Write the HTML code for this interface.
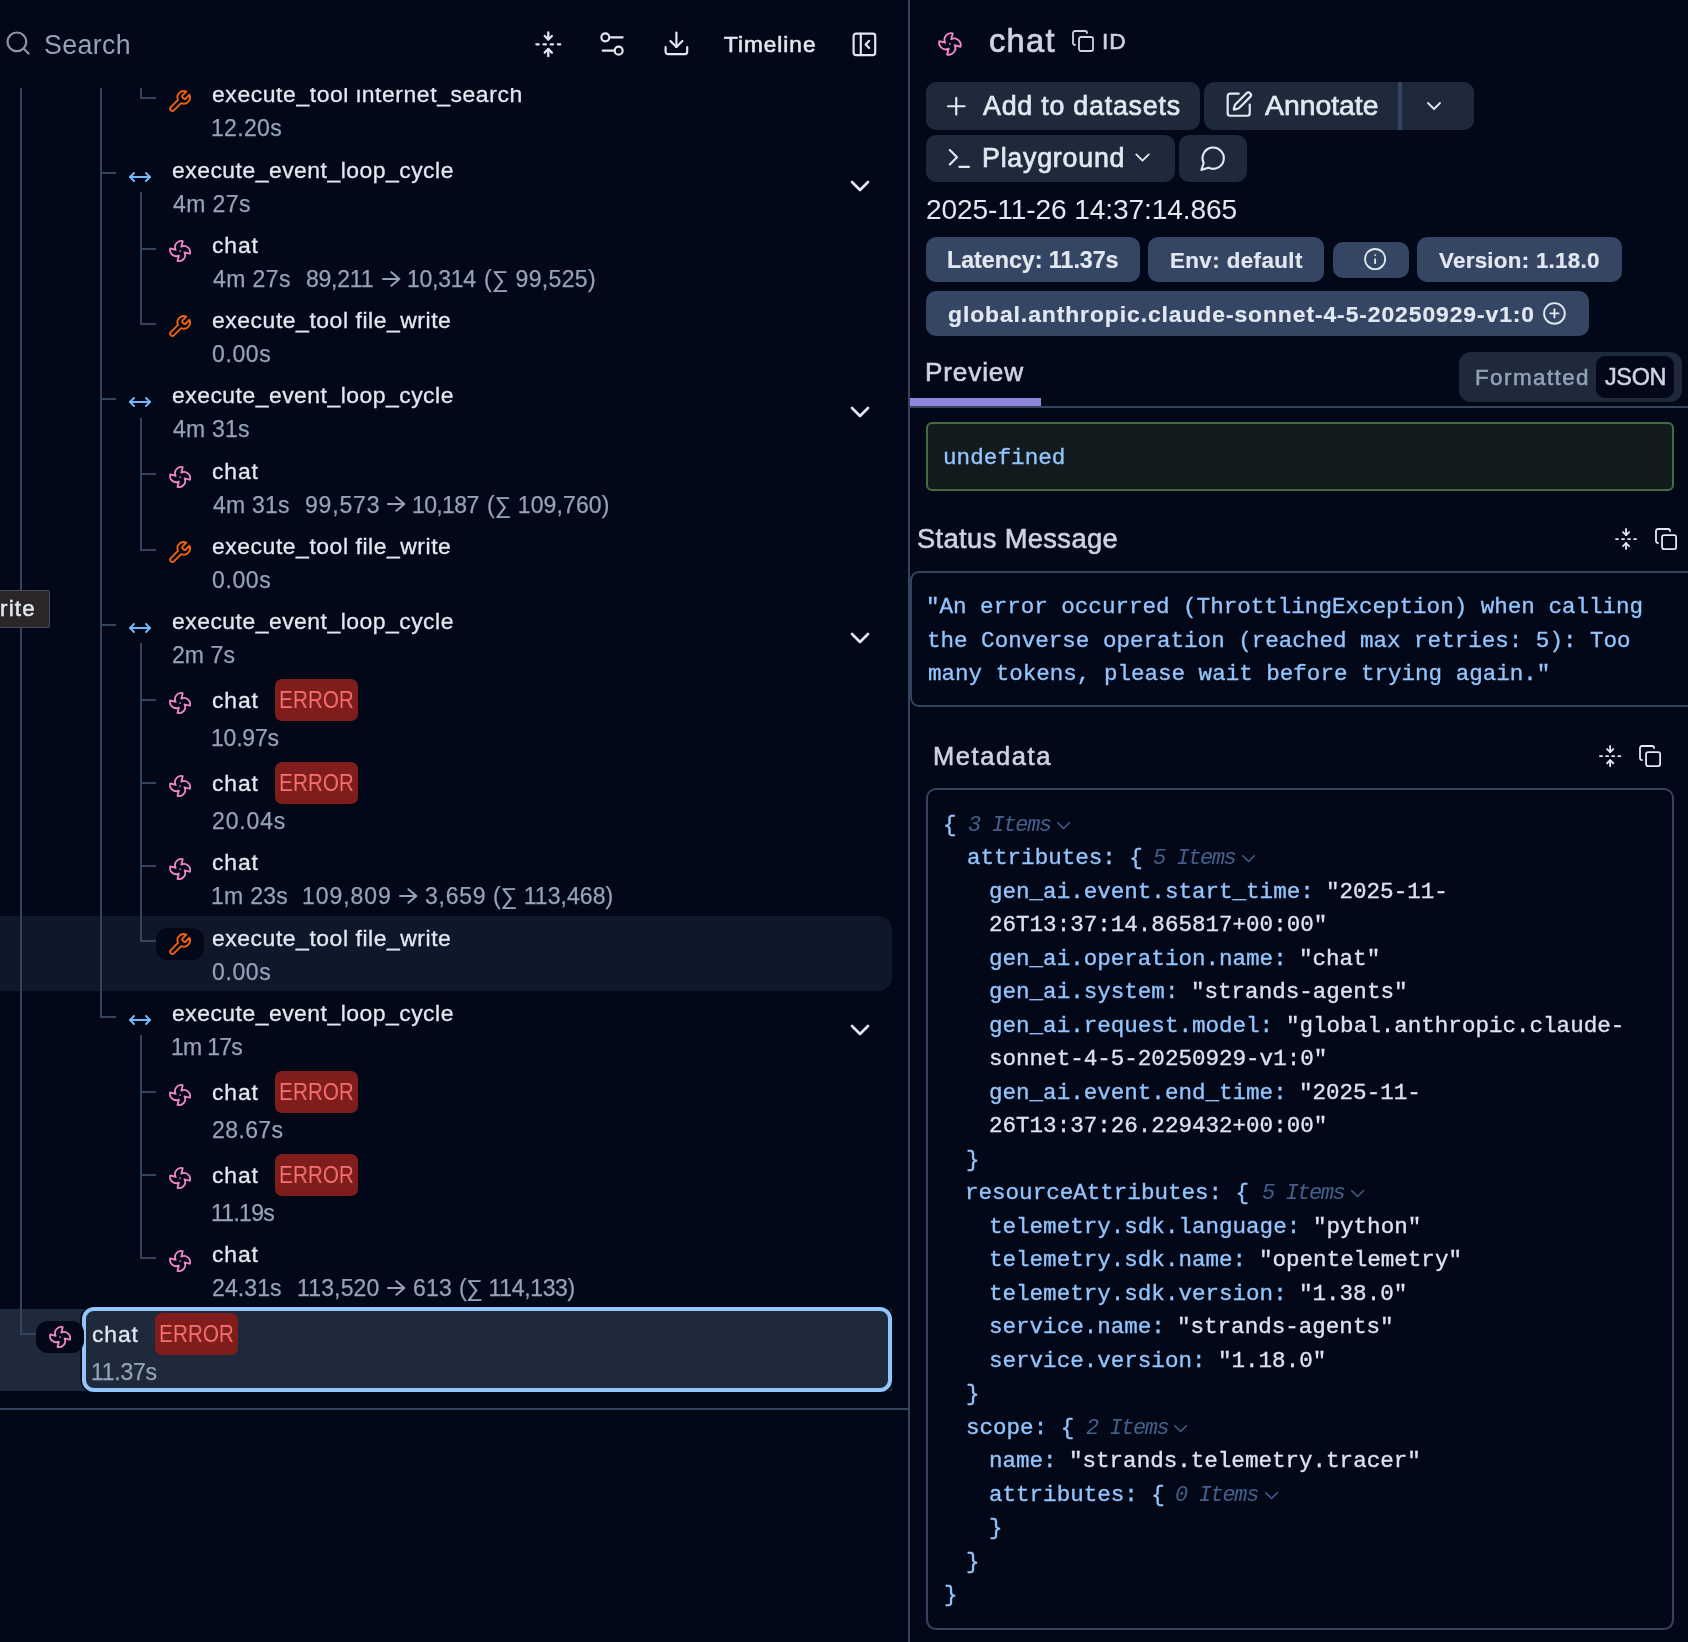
<!DOCTYPE html>
<html><head><meta charset="utf-8"><title>Trace</title>
<style>
html,body{margin:0;padding:0;}
body{width:1688px;height:1642px;overflow:hidden;background:#020817;position:relative;font-family:"Liberation Sans",sans-serif;}
.t{position:absolute;line-height:1;white-space:pre;will-change:transform;}
.s{font-family:"Liberation Sans",sans-serif;}
.m{font-family:"Liberation Mono",monospace;}
.b{position:absolute;}
.i{position:absolute;fill:none;stroke-linecap:round;stroke-linejoin:round;overflow:visible;}
.clip{position:absolute;overflow:hidden;}
</style></head><body>
<div class="clip" style="left:0;top:88px;width:908px;height:1554px">
<div class="b" style="left:-20px;top:827.85px;width:912px;height:75px;background:#0f172a;border-radius:14px"></div>
<div class="b" style="left:-20px;top:1220.8px;width:912px;height:82.6px;background:#1e293b;border-radius:0"></div>
<div class="b" style="left:81.5px;top:1219px;width:810.5px;height:84.8px;background:#1e293b;border-radius:12px;border:4px solid #93c5fd;box-sizing:border-box;box-shadow:0 0 0 1.5px #020817"></div>
<div class="b" style="left:20px;top:0px;width:2px;height:1246.8px;background:#34445f"></div>
<div class="b" style="left:100px;top:0px;width:2px;height:929.5px;background:#34445f"></div>
<div class="b" style="left:140px;top:0px;width:2px;height:11px;background:#34445f"></div>
<div class="b" style="left:140px;top:103.75px;width:2px;height:133px;background:#34445f"></div>
<div class="b" style="left:140px;top:329.5px;width:2px;height:133px;background:#34445f"></div>
<div class="b" style="left:140px;top:555.25px;width:2px;height:299px;background:#34445f"></div>
<div class="b" style="left:140px;top:947px;width:2px;height:223.75px;background:#34445f"></div>
<div class="b" style="left:140px;top:9px;width:16px;height:2px;background:#34445f"></div>
<div class="b" style="left:100px;top:84.25px;width:16px;height:2px;background:#34445f"></div>
<div class="b" style="left:140px;top:159.5px;width:16px;height:2px;background:#34445f"></div>
<div class="b" style="left:140px;top:234.75px;width:16px;height:2px;background:#34445f"></div>
<div class="b" style="left:100px;top:310px;width:16px;height:2px;background:#34445f"></div>
<div class="b" style="left:140px;top:385.25px;width:16px;height:2px;background:#34445f"></div>
<div class="b" style="left:140px;top:460.5px;width:16px;height:2px;background:#34445f"></div>
<div class="b" style="left:100px;top:535.75px;width:16px;height:2px;background:#34445f"></div>
<div class="b" style="left:140px;top:611px;width:16px;height:2px;background:#34445f"></div>
<div class="b" style="left:140px;top:694px;width:16px;height:2px;background:#34445f"></div>
<div class="b" style="left:140px;top:777px;width:16px;height:2px;background:#34445f"></div>
<div class="b" style="left:140px;top:852.25px;width:16px;height:2px;background:#34445f"></div>
<div class="b" style="left:100px;top:927.5px;width:16px;height:2px;background:#34445f"></div>
<div class="b" style="left:140px;top:1002.75px;width:16px;height:2px;background:#34445f"></div>
<div class="b" style="left:140px;top:1085.75px;width:16px;height:2px;background:#34445f"></div>
<div class="b" style="left:140px;top:1168.75px;width:16px;height:2px;background:#34445f"></div>
<div class="b" style="left:20px;top:1244.8px;width:16px;height:2px;background:#34445f"></div>
<svg class="i" style="left:167.4px;top:0.7px" width="25.1" height="25.1" viewBox="0 0 24 24" stroke="#f2620f" stroke-width="1.8"><path d="M14.7 6.3a1 1 0 0 0 0 1.4l1.6 1.6a1 1 0 0 0 1.4 0l3.77-3.77a6 6 0 0 1-7.94 7.94l-6.91 6.91a2.12 2.12 0 0 1-3-3l6.91-6.91a6 6 0 0 1 7.94-7.94l-3.76 3.76z"/></svg>
<div class="t s " style="left:212.23px;top:-5px;font-size:22.95px;color:#e2e8f0;-webkit-text-stroke:0.3px #e2e8f0;letter-spacing:0.58px">execute_tool internet_search</div>
<div class="t s " style="left:211.28px;top:29px;font-size:23px;color:#94a3b8;-webkit-text-stroke:0.25px #94a3b8;letter-spacing:0.32px">12.20s</div>
<svg class="i" style="left:128px;top:76.55px" width="24" height="24" viewBox="0 0 24 24" stroke="#78b6fb" stroke-width="1.95"><polyline points="18 8 22 12 18 16"/><polyline points="6 8 2 12 6 16"/><line x1="2" x2="22" y1="12" y2="12"/></svg>
<div class="t s " style="left:172.23px;top:71px;font-size:22.95px;color:#e2e8f0;-webkit-text-stroke:0.3px #e2e8f0;letter-spacing:0.48px">execute_event_loop_cycle</div>
<div class="t s " style="left:172.66px;top:105px;font-size:23px;color:#94a3b8;-webkit-text-stroke:0.25px #94a3b8;letter-spacing:0.42px">4m 27s</div>
<svg class="i" style="left:844px;top:82.25px" width="32" height="32" viewBox="0 0 24 24" stroke="#e2e8f0" stroke-width="2"><path d="m6 9 6 6 6-6"/></svg>
<svg class="i" style="left:167.9px;top:151.4px" width="24.2" height="24.2" viewBox="0 0 24 24" stroke="#f58ac6" stroke-width="1.75"><path d="M10.827 16.379a6.082 6.082 0 0 1-8.618-7.002l5.412 1.45a6.082 6.082 0 0 1 7.002-8.618l-1.45 5.412a6.082 6.082 0 0 1 8.618 7.002l-5.412-1.45a6.082 6.082 0 0 1-7.002 8.618l1.45-5.412Z"/><path d="M12 12v.01"/></svg>
<div class="t s " style="left:212.23px;top:146px;font-size:22.95px;color:#e2e8f0;-webkit-text-stroke:0.3px #e2e8f0;letter-spacing:0.83px">chat</div>
<div class="t s " style="left:212.66px;top:180px;font-size:23px;color:#94a3b8;-webkit-text-stroke:0.25px #94a3b8;letter-spacing:0.42px">4m 27s</div>
<div class="t s " style="left:306.2px;top:180px;font-size:23px;color:#94a3b8;-webkit-text-stroke:0.25px #94a3b8;letter-spacing:-0.24px">89,211</div>
<svg class="i" style="left:381.3px;top:181.7px" width="22" height="18" viewBox="0 0 22 18" stroke="#94a3b8" stroke-width="2.1"><path d="M2 9h16.3M10.4 2.2l7.9 6.8-7.9 6.8"/></svg>
<div class="t s " style="left:406.79px;top:180px;font-size:23px;color:#94a3b8;-webkit-text-stroke:0.25px #94a3b8;letter-spacing:-0.24px">10,314</div>
<div class="t s " style="left:484.05px;top:180px;font-size:23px;color:#94a3b8;-webkit-text-stroke:0.25px #94a3b8;letter-spacing:0.35px">(∑ 99,525)</div>
<svg class="i" style="left:167.4px;top:226.45px" width="25.1" height="25.1" viewBox="0 0 24 24" stroke="#f2620f" stroke-width="1.8"><path d="M14.7 6.3a1 1 0 0 0 0 1.4l1.6 1.6a1 1 0 0 0 1.4 0l3.77-3.77a6 6 0 0 1-7.94 7.94l-6.91 6.91a2.12 2.12 0 0 1-3-3l6.91-6.91a6 6 0 0 1 7.94-7.94l-3.76 3.76z"/></svg>
<div class="t s " style="left:212.23px;top:221px;font-size:22.95px;color:#e2e8f0;-webkit-text-stroke:0.3px #e2e8f0;letter-spacing:0.54px">execute_tool file_write</div>
<div class="t s " style="left:212.21px;top:255px;font-size:23px;color:#94a3b8;-webkit-text-stroke:0.25px #94a3b8;letter-spacing:0.61px">0.00s</div>
<svg class="i" style="left:128px;top:302.3px" width="24" height="24" viewBox="0 0 24 24" stroke="#78b6fb" stroke-width="1.95"><polyline points="18 8 22 12 18 16"/><polyline points="6 8 2 12 6 16"/><line x1="2" x2="22" y1="12" y2="12"/></svg>
<div class="t s " style="left:172.23px;top:296px;font-size:22.95px;color:#e2e8f0;-webkit-text-stroke:0.3px #e2e8f0;letter-spacing:0.48px">execute_event_loop_cycle</div>
<div class="t s " style="left:172.66px;top:330px;font-size:23px;color:#94a3b8;-webkit-text-stroke:0.25px #94a3b8;letter-spacing:0.22px">4m 31s</div>
<svg class="i" style="left:844px;top:308px" width="32" height="32" viewBox="0 0 24 24" stroke="#e2e8f0" stroke-width="2"><path d="m6 9 6 6 6-6"/></svg>
<svg class="i" style="left:167.9px;top:377.15px" width="24.2" height="24.2" viewBox="0 0 24 24" stroke="#f58ac6" stroke-width="1.75"><path d="M10.827 16.379a6.082 6.082 0 0 1-8.618-7.002l5.412 1.45a6.082 6.082 0 0 1 7.002-8.618l-1.45 5.412a6.082 6.082 0 0 1 8.618 7.002l-5.412-1.45a6.082 6.082 0 0 1-7.002 8.618l1.45-5.412Z"/><path d="M12 12v.01"/></svg>
<div class="t s " style="left:212.23px;top:372px;font-size:22.95px;color:#e2e8f0;-webkit-text-stroke:0.3px #e2e8f0;letter-spacing:0.83px">chat</div>
<div class="t s " style="left:212.66px;top:406px;font-size:23px;color:#94a3b8;-webkit-text-stroke:0.25px #94a3b8;letter-spacing:0.22px">4m 31s</div>
<div class="t s " style="left:304.78px;top:406px;font-size:23px;color:#94a3b8;-webkit-text-stroke:0.25px #94a3b8;letter-spacing:0.83px">99,573</div>
<svg class="i" style="left:385.8px;top:407.45px" width="22" height="18" viewBox="0 0 22 18" stroke="#94a3b8" stroke-width="2.1"><path d="M2 9h16.3M10.4 2.2l7.9 6.8-7.9 6.8"/></svg>
<div class="t s " style="left:412.19px;top:406px;font-size:23px;color:#94a3b8;-webkit-text-stroke:0.25px #94a3b8;letter-spacing:-0.63px">10,187</div>
<div class="t s " style="left:487.25px;top:406px;font-size:23px;color:#94a3b8;-webkit-text-stroke:0.25px #94a3b8;letter-spacing:0.11px">(∑ 109,760)</div>
<svg class="i" style="left:167.4px;top:452.2px" width="25.1" height="25.1" viewBox="0 0 24 24" stroke="#f2620f" stroke-width="1.8"><path d="M14.7 6.3a1 1 0 0 0 0 1.4l1.6 1.6a1 1 0 0 0 1.4 0l3.77-3.77a6 6 0 0 1-7.94 7.94l-6.91 6.91a2.12 2.12 0 0 1-3-3l6.91-6.91a6 6 0 0 1 7.94-7.94l-3.76 3.76z"/></svg>
<div class="t s " style="left:212.23px;top:447px;font-size:22.95px;color:#e2e8f0;-webkit-text-stroke:0.3px #e2e8f0;letter-spacing:0.54px">execute_tool file_write</div>
<div class="t s " style="left:212.21px;top:481px;font-size:23px;color:#94a3b8;-webkit-text-stroke:0.25px #94a3b8;letter-spacing:0.61px">0.00s</div>
<svg class="i" style="left:128px;top:528.05px" width="24" height="24" viewBox="0 0 24 24" stroke="#78b6fb" stroke-width="1.95"><polyline points="18 8 22 12 18 16"/><polyline points="6 8 2 12 6 16"/><line x1="2" x2="22" y1="12" y2="12"/></svg>
<div class="t s " style="left:172.23px;top:522px;font-size:22.95px;color:#e2e8f0;-webkit-text-stroke:0.3px #e2e8f0;letter-spacing:0.48px">execute_event_loop_cycle</div>
<div class="t s " style="left:171.97px;top:556px;font-size:23px;color:#94a3b8;-webkit-text-stroke:0.25px #94a3b8;letter-spacing:0.08px">2m 7s</div>
<svg class="i" style="left:844px;top:533.75px" width="32" height="32" viewBox="0 0 24 24" stroke="#e2e8f0" stroke-width="2"><path d="m6 9 6 6 6-6"/></svg>
<svg class="i" style="left:167.9px;top:602.9px" width="24.2" height="24.2" viewBox="0 0 24 24" stroke="#f58ac6" stroke-width="1.75"><path d="M10.827 16.379a6.082 6.082 0 0 1-8.618-7.002l5.412 1.45a6.082 6.082 0 0 1 7.002-8.618l-1.45 5.412a6.082 6.082 0 0 1 8.618 7.002l-5.412-1.45a6.082 6.082 0 0 1-7.002 8.618l1.45-5.412Z"/><path d="M12 12v.01"/></svg>
<div class="t s " style="left:212.23px;top:601px;font-size:22.95px;color:#e2e8f0;-webkit-text-stroke:0.3px #e2e8f0;letter-spacing:0.83px">chat</div>
<div class="b" style="left:275.1px;top:590.9px;width:82.7px;height:42.1px;background:#7f1d1d;border-radius:7px"></div>
<div class="t s " style="left:278.64px;top:601px;font-size:23.57px;color:#f87171;transform:scaleX(0.8802);transform-origin:0 0">ERROR</div>
<div class="t s " style="left:211.28px;top:639px;font-size:23px;color:#94a3b8;-webkit-text-stroke:0.25px #94a3b8;letter-spacing:-0.2px">10.97s</div>
<svg class="i" style="left:167.9px;top:685.9px" width="24.2" height="24.2" viewBox="0 0 24 24" stroke="#f58ac6" stroke-width="1.75"><path d="M10.827 16.379a6.082 6.082 0 0 1-8.618-7.002l5.412 1.45a6.082 6.082 0 0 1 7.002-8.618l-1.45 5.412a6.082 6.082 0 0 1 8.618 7.002l-5.412-1.45a6.082 6.082 0 0 1-7.002 8.618l1.45-5.412Z"/><path d="M12 12v.01"/></svg>
<div class="t s " style="left:212.23px;top:684px;font-size:22.95px;color:#e2e8f0;-webkit-text-stroke:0.3px #e2e8f0;letter-spacing:0.83px">chat</div>
<div class="b" style="left:275.1px;top:673.9px;width:82.7px;height:42.1px;background:#7f1d1d;border-radius:7px"></div>
<div class="t s " style="left:278.64px;top:684px;font-size:23.57px;color:#f87171;transform:scaleX(0.8802);transform-origin:0 0">ERROR</div>
<div class="t s " style="left:211.97px;top:722px;font-size:23px;color:#94a3b8;-webkit-text-stroke:0.25px #94a3b8;letter-spacing:0.86px">20.04s</div>
<svg class="i" style="left:167.9px;top:768.9px" width="24.2" height="24.2" viewBox="0 0 24 24" stroke="#f58ac6" stroke-width="1.75"><path d="M10.827 16.379a6.082 6.082 0 0 1-8.618-7.002l5.412 1.45a6.082 6.082 0 0 1 7.002-8.618l-1.45 5.412a6.082 6.082 0 0 1 8.618 7.002l-5.412-1.45a6.082 6.082 0 0 1-7.002 8.618l1.45-5.412Z"/><path d="M12 12v.01"/></svg>
<div class="t s " style="left:212.23px;top:763px;font-size:22.95px;color:#e2e8f0;-webkit-text-stroke:0.3px #e2e8f0;letter-spacing:0.83px">chat</div>
<div class="t s " style="left:211.28px;top:797px;font-size:23px;color:#94a3b8;-webkit-text-stroke:0.25px #94a3b8;letter-spacing:0.27px">1m 23s</div>
<div class="t s " style="left:302.49px;top:797px;font-size:23px;color:#94a3b8;-webkit-text-stroke:0.25px #94a3b8;letter-spacing:0.95px">109,809</div>
<svg class="i" style="left:397.8px;top:799.2px" width="22" height="18" viewBox="0 0 22 18" stroke="#94a3b8" stroke-width="2.1"><path d="M2 9h16.3M10.4 2.2l7.9 6.8-7.9 6.8"/></svg>
<div class="t s " style="left:424.6px;top:797px;font-size:23px;color:#94a3b8;-webkit-text-stroke:0.25px #94a3b8;letter-spacing:0.77px">3,659</div>
<div class="t s " style="left:493.25px;top:797px;font-size:23px;color:#94a3b8;-webkit-text-stroke:0.25px #94a3b8;letter-spacing:0.07px">(∑ 113,468)</div>
<div class="b" style="left:156px;top:840.25px;width:48px;height:32px;background:#020817;border-radius:12px"></div>
<svg class="i" style="left:167.4px;top:843.95px" width="25.1" height="25.1" viewBox="0 0 24 24" stroke="#f2620f" stroke-width="1.8"><path d="M14.7 6.3a1 1 0 0 0 0 1.4l1.6 1.6a1 1 0 0 0 1.4 0l3.77-3.77a6 6 0 0 1-7.94 7.94l-6.91 6.91a2.12 2.12 0 0 1-3-3l6.91-6.91a6 6 0 0 1 7.94-7.94l-3.76 3.76z"/></svg>
<div class="t s " style="left:212.23px;top:839px;font-size:22.95px;color:#e2e8f0;-webkit-text-stroke:0.3px #e2e8f0;letter-spacing:0.54px">execute_tool file_write</div>
<div class="t s " style="left:212.21px;top:873px;font-size:23px;color:#94a3b8;-webkit-text-stroke:0.25px #94a3b8;letter-spacing:0.61px">0.00s</div>
<svg class="i" style="left:128px;top:919.8px" width="24" height="24" viewBox="0 0 24 24" stroke="#78b6fb" stroke-width="1.95"><polyline points="18 8 22 12 18 16"/><polyline points="6 8 2 12 6 16"/><line x1="2" x2="22" y1="12" y2="12"/></svg>
<div class="t s " style="left:172.23px;top:914px;font-size:22.95px;color:#e2e8f0;-webkit-text-stroke:0.3px #e2e8f0;letter-spacing:0.48px">execute_event_loop_cycle</div>
<div class="t s " style="left:171.28px;top:948px;font-size:23px;color:#94a3b8;-webkit-text-stroke:0.25px #94a3b8;letter-spacing:-0.71px">1m 17s</div>
<svg class="i" style="left:844px;top:925.5px" width="32" height="32" viewBox="0 0 24 24" stroke="#e2e8f0" stroke-width="2"><path d="m6 9 6 6 6-6"/></svg>
<svg class="i" style="left:167.9px;top:994.65px" width="24.2" height="24.2" viewBox="0 0 24 24" stroke="#f58ac6" stroke-width="1.75"><path d="M10.827 16.379a6.082 6.082 0 0 1-8.618-7.002l5.412 1.45a6.082 6.082 0 0 1 7.002-8.618l-1.45 5.412a6.082 6.082 0 0 1 8.618 7.002l-5.412-1.45a6.082 6.082 0 0 1-7.002 8.618l1.45-5.412Z"/><path d="M12 12v.01"/></svg>
<div class="t s " style="left:212.23px;top:993px;font-size:22.95px;color:#e2e8f0;-webkit-text-stroke:0.3px #e2e8f0;letter-spacing:0.83px">chat</div>
<div class="b" style="left:275.1px;top:982.65px;width:82.7px;height:42.1px;background:#7f1d1d;border-radius:7px"></div>
<div class="t s " style="left:278.64px;top:993px;font-size:23.57px;color:#f87171;transform:scaleX(0.8802);transform-origin:0 0">ERROR</div>
<div class="t s " style="left:211.97px;top:1031px;font-size:23px;color:#94a3b8;-webkit-text-stroke:0.25px #94a3b8;letter-spacing:0.4px">28.67s</div>
<svg class="i" style="left:167.9px;top:1077.65px" width="24.2" height="24.2" viewBox="0 0 24 24" stroke="#f58ac6" stroke-width="1.75"><path d="M10.827 16.379a6.082 6.082 0 0 1-8.618-7.002l5.412 1.45a6.082 6.082 0 0 1 7.002-8.618l-1.45 5.412a6.082 6.082 0 0 1 8.618 7.002l-5.412-1.45a6.082 6.082 0 0 1-7.002 8.618l1.45-5.412Z"/><path d="M12 12v.01"/></svg>
<div class="t s " style="left:212.23px;top:1076px;font-size:22.95px;color:#e2e8f0;-webkit-text-stroke:0.3px #e2e8f0;letter-spacing:0.83px">chat</div>
<div class="b" style="left:275.1px;top:1065.65px;width:82.7px;height:42.1px;background:#7f1d1d;border-radius:7px"></div>
<div class="t s " style="left:278.64px;top:1076px;font-size:23.57px;color:#f87171;transform:scaleX(0.8802);transform-origin:0 0">ERROR</div>
<div class="t s " style="left:211.28px;top:1114px;font-size:23px;color:#94a3b8;-webkit-text-stroke:0.25px #94a3b8;letter-spacing:-0.72px">11.19s</div>
<svg class="i" style="left:167.9px;top:1160.65px" width="24.2" height="24.2" viewBox="0 0 24 24" stroke="#f58ac6" stroke-width="1.75"><path d="M10.827 16.379a6.082 6.082 0 0 1-8.618-7.002l5.412 1.45a6.082 6.082 0 0 1 7.002-8.618l-1.45 5.412a6.082 6.082 0 0 1 8.618 7.002l-5.412-1.45a6.082 6.082 0 0 1-7.002 8.618l1.45-5.412Z"/><path d="M12 12v.01"/></svg>
<div class="t s " style="left:212.23px;top:1155px;font-size:22.95px;color:#e2e8f0;-webkit-text-stroke:0.3px #e2e8f0;letter-spacing:0.83px">chat</div>
<div class="t s " style="left:211.97px;top:1189px;font-size:23px;color:#94a3b8;-webkit-text-stroke:0.25px #94a3b8;letter-spacing:0.1px">24.31s</div>
<div class="t s " style="left:296.79px;top:1189px;font-size:23px;color:#94a3b8;-webkit-text-stroke:0.25px #94a3b8;letter-spacing:0.15px">113,520</div>
<svg class="i" style="left:385.8px;top:1190.95px" width="22" height="18" viewBox="0 0 22 18" stroke="#94a3b8" stroke-width="2.1"><path d="M2 9h16.3M10.4 2.2l7.9 6.8-7.9 6.8"/></svg>
<div class="t s " style="left:412.88px;top:1189px;font-size:23px;color:#94a3b8;-webkit-text-stroke:0.25px #94a3b8;letter-spacing:0.27px">613</div>
<div class="t s " style="left:459.05px;top:1189px;font-size:23px;color:#94a3b8;-webkit-text-stroke:0.25px #94a3b8;letter-spacing:-0.33px">(∑ 114,133)</div>
<div class="b" style="left:36px;top:1232.8px;width:48px;height:32px;background:#020817;border-radius:12px"></div>
<svg class="i" style="left:47.9px;top:1236.7px" width="24.2" height="24.2" viewBox="0 0 24 24" stroke="#f58ac6" stroke-width="1.75"><path d="M10.827 16.379a6.082 6.082 0 0 1-8.618-7.002l5.412 1.45a6.082 6.082 0 0 1 7.002-8.618l-1.45 5.412a6.082 6.082 0 0 1 8.618 7.002l-5.412-1.45a6.082 6.082 0 0 1-7.002 8.618l1.45-5.412Z"/><path d="M12 12v.01"/></svg>
<div class="t s " style="left:92.23px;top:1235px;font-size:22.95px;color:#e2e8f0;-webkit-text-stroke:0.3px #e2e8f0;letter-spacing:0.83px">chat</div>
<div class="b" style="left:155.1px;top:1224.7px;width:82.7px;height:42.1px;background:#7f1d1d;border-radius:7px"></div>
<div class="t s " style="left:158.64px;top:1235px;font-size:23.57px;color:#f87171;transform:scaleX(0.8802);transform-origin:0 0">ERROR</div>
<div class="t s " style="left:91.28px;top:1273px;font-size:23px;color:#94a3b8;-webkit-text-stroke:0.25px #94a3b8;letter-spacing:-0.28px">11.37s</div>
<div class="b" style="left:-6px;top:502.3px;width:56px;height:37.4px;background:#2c2628;border-radius:2px;border:1.5px solid #454c5c;box-sizing:border-box"></div>
<div class="t s tip" style="left:0.48px;top:510px;font-size:22.4px;color:#e2e8f0;-webkit-text-stroke:0.5px #e2e8f0;letter-spacing:1.19px">rite</div>
<div class="b" style="left:0px;top:1320px;width:908px;height:2px;background:#34445f"></div>
</div>
<svg class="i" style="left:3.86px;top:29.46px" width="28.08" height="28.08" viewBox="0 0 24 24" stroke="#8b95a7" stroke-width="1.9"><circle cx="11" cy="11" r="8"/><path d="m21 21-4.3-4.3"/></svg>
<div class="t s " style="left:43.66px;top:32px;font-size:26.71px;color:#94a3b8;letter-spacing:0.41px">Search</div>
<svg class="i" style="left:533.61px;top:29.71px" width="28.58" height="28.58" viewBox="0 0 24 24" stroke="#e2e8f0" stroke-width="1.9"><path d="M12 22v-6"/><path d="M12 8V2"/><path d="M4 12H2"/><path d="M10 12H8"/><path d="M16 12h-2"/><path d="M22 12h-2"/><path d="m15 19-3-3-3 3"/><path d="m15 5-3 3-3-3"/></svg>
<svg class="i" style="left:596px;top:27.8px" width="32" height="32" viewBox="0 0 24 24" stroke="#e2e8f0" stroke-width="1.6"><path d="M20 7h-9"/><path d="M14 17H5"/><circle cx="17" cy="17" r="3"/><circle cx="7" cy="7" r="3"/></svg>
<svg class="i" style="left:661.6px;top:29.4px" width="28.8" height="28.8" viewBox="0 0 24 24" stroke="#e2e8f0" stroke-width="1.8"><path d="M21 15v4a2 2 0 0 1-2 2H5a2 2 0 0 1-2-2v-4"/><polyline points="7 10 12 15 17 10"/><line x1="12" x2="12" y1="15" y2="3"/></svg>
<div class="t s " style="left:724.05px;top:34px;font-size:22.6px;color:#e2e8f0;-webkit-text-stroke:0.6px #e2e8f0;letter-spacing:0.99px">Timeline</div>
<svg class="i" style="left:849.6px;top:29.8px" width="28.8" height="28.8" viewBox="0 0 24 24" stroke="#e2e8f0" stroke-width="1.8"><rect width="18" height="18" x="3" y="3" rx="2"/><path d="M9 3v18"/><path d="m16 15-3-3 3-3"/></svg>
<div class="b" style="left:908px;top:0px;width:2px;height:1642px;background:#34445f"></div>
<svg class="i" style="left:937.08px;top:31.08px" width="25.85" height="25.85" viewBox="0 0 24 24" stroke="#f58ac6" stroke-width="1.75"><path d="M10.827 16.379a6.082 6.082 0 0 1-8.618-7.002l5.412 1.45a6.082 6.082 0 0 1 7.002-8.618l-1.45 5.412a6.082 6.082 0 0 1 8.618 7.002l-5.412-1.45a6.082 6.082 0 0 1-7.002 8.618l1.45-5.412Z"/><path d="M12 12v.01"/></svg>
<div class="t s " style="left:989.34px;top:25px;font-size:32.67px;color:#cbd5e1;-webkit-text-stroke:0.7px #cbd5e1;letter-spacing:1.29px">chat</div>
<svg class="i" style="left:1071px;top:29px" width="24" height="24" viewBox="0 0 24 24" stroke="#cbd5e1" stroke-width="1.8"><rect width="14" height="14" x="8" y="8" rx="2" ry="2"/><path d="M4 16c-1.1 0-2-.9-2-2V4c0-1.1.9-2 2-2h10c1.1 0 2 .9 2 2"/></svg>
<div class="t s " style="left:1102.25px;top:30px;font-size:22.75px;color:#cbd5e1;-webkit-text-stroke:0.6px #cbd5e1;letter-spacing:0.83px">ID</div>
<div class="b" style="left:926px;top:82px;width:274px;height:48px;background:#1e293b;border-radius:10px"></div>
<svg class="i" style="left:941.85px;top:91.55px" width="28.5" height="28.5" viewBox="0 0 24 24" stroke="#e2e8f0" stroke-width="1.8"><path d="M5 12h14"/><path d="M12 5v14"/></svg>
<div class="t s " style="left:982.85px;top:93px;font-size:26.78px;color:#e2e8f0;-webkit-text-stroke:0.7px #e2e8f0;letter-spacing:0.79px">Add to datasets</div>
<div class="b" style="left:1204.2px;top:82px;width:269.5px;height:48px;background:#1e293b;border-radius:10px"></div>
<div class="b" style="left:1397.6px;top:82px;width:4.4px;height:48px;background:#34445f"></div>
<svg class="i" style="left:1223.55px;top:90.35px" width="29.41" height="29.41" viewBox="0 0 24 24" stroke="#e2e8f0" stroke-width="1.8"><path d="M12 3H5a2 2 0 0 0-2 2v14a2 2 0 0 0 2 2h14a2 2 0 0 0 2-2v-7"/><path d="M18.375 2.625a1 1 0 0 1 3 3l-9.013 9.014a2 2 0 0 1-.853.505l-2.873.84a.5.5 0 0 1-.62-.62l.84-2.873a2 2 0 0 1 .506-.852z"/></svg>
<div class="t s " style="left:1264.65px;top:91px;font-size:28.33px;color:#e2e8f0;-webkit-text-stroke:0.7px #e2e8f0;letter-spacing:0px">Annotate</div>
<svg class="i" style="left:1422px;top:93.7px" width="24" height="24" viewBox="0 0 24 24" stroke="#e2e8f0" stroke-width="1.8"><path d="m6 9 6 6 6-6"/></svg>
<div class="b" style="left:926px;top:134.5px;width:249px;height:47.1px;background:#1e293b;border-radius:10px"></div>
<svg class="i" style="left:945.2px;top:144px" width="28.8" height="28.8" viewBox="0 0 24 24" stroke="#e2e8f0" stroke-width="1.8"><polyline points="4 17 10 11 4 5"/><line x1="12" x2="20" y1="19" y2="19"/></svg>
<div class="t s " style="left:981.61px;top:145px;font-size:26.78px;color:#e2e8f0;-webkit-text-stroke:0.7px #e2e8f0;letter-spacing:0.78px">Playground</div>
<svg class="i" style="left:1130.19px;top:144.66px" width="25.03" height="25.03" viewBox="0 0 24 24" stroke="#e2e8f0" stroke-width="1.8"><path d="m6 9 6 6 6-6"/></svg>
<div class="b" style="left:1179.3px;top:134.5px;width:67.7px;height:47.1px;background:#1e293b;border-radius:10px"></div>
<svg class="i" style="left:1198.82px;top:144.02px" width="28.36" height="28.36" viewBox="0 0 24 24" stroke="#e2e8f0" stroke-width="1.8"><path d="M7.9 20A9 9 0 1 0 4 16.1L2 22Z"/></svg>
<div class="t s " style="left:925.59px;top:196px;font-size:28.14px;color:#e2e8f0;letter-spacing:-0.12px">2025-11-26 14:37:14.865</div>
<div class="b" style="left:926.2px;top:237.3px;width:214px;height:45.2px;background:#354665;border-radius:10px"></div>
<div class="t s " style="left:947.07px;top:249px;font-size:23.29px;color:#e2e8f0;font-weight:700;-webkit-text-stroke:0.2px #e2e8f0;letter-spacing:-0.04px">Latency: 11.37s</div>
<div class="b" style="left:1148.4px;top:237.3px;width:175.9px;height:45.2px;background:#354665;border-radius:10px"></div>
<div class="t s " style="left:1169.94px;top:250px;font-size:22.33px;color:#e2e8f0;font-weight:700;-webkit-text-stroke:0.2px #e2e8f0;letter-spacing:0.42px">Env: default</div>
<div class="b" style="left:1333px;top:242px;width:76px;height:35.8px;background:#354665;border-radius:10px"></div>
<svg class="i" style="left:1362.59px;top:246.99px" width="24.22" height="24.22" viewBox="0 0 24 24" stroke="#e2e8f0" stroke-width="1.8"><circle cx="12" cy="12" r="10"/><path d="M12 16v-4"/><path d="M12 8h.01"/></svg>
<div class="b" style="left:1417px;top:237.3px;width:205px;height:45.2px;background:#354665;border-radius:10px"></div>
<div class="t s " style="left:1439.38px;top:250px;font-size:22.33px;color:#e2e8f0;font-weight:700;-webkit-text-stroke:0.2px #e2e8f0;letter-spacing:0.29px">Version: 1.18.0</div>
<div class="b" style="left:926.2px;top:290.8px;width:662.4px;height:44.9px;background:#354665;border-radius:10px"></div>
<div class="t s " style="left:947.78px;top:303px;font-size:22.88px;color:#e2e8f0;font-weight:700;-webkit-text-stroke:0.2px #e2e8f0;letter-spacing:0.92px">global.anthropic.claude-sonnet-4-5-20250929-v1:0</div>
<svg class="i" style="left:1542.46px;top:301.36px" width="24.87" height="24.87" viewBox="0 0 24 24" stroke="#e2e8f0" stroke-width="1.8"><circle cx="12" cy="12" r="10"/><path d="M8 12h8"/><path d="M12 8v8"/></svg>
<div class="t s " style="left:925.21px;top:359px;font-size:26.16px;color:#cbd5e1;-webkit-text-stroke:0.6px #cbd5e1;letter-spacing:0.84px">Preview</div>
<div class="b" style="left:910px;top:406px;width:778px;height:2px;background:#34445f"></div>
<div class="b" style="left:910px;top:398px;width:131px;height:8px;background:#9185dc"></div>
<div class="b" style="left:1459px;top:352px;width:223px;height:49.7px;background:#1e293b;border-radius:12px"></div>
<div class="b" style="left:1596px;top:356.2px;width:78px;height:41.4px;background:#020817;border-radius:9px"></div>
<div class="t s " style="left:1474.86px;top:367px;font-size:22.4px;color:#94a3b8;-webkit-text-stroke:0.5px #94a3b8;letter-spacing:1.44px">Formatted</div>
<div class="t s " style="left:1604.68px;top:366px;font-size:23.36px;color:#cbd5e1;-webkit-text-stroke:0.5px #cbd5e1;letter-spacing:-0.31px">JSON</div>
<div class="b" style="left:926px;top:422px;width:748px;height:68.6px;background:#131a1d;border-radius:6px;border:2px solid #466a42;box-sizing:border-box"></div>
<div class="t m " style="left:942.94px;top:447px;font-size:22.6px;color:#93c5fd;-webkit-text-stroke:0.35px #93c5fd;letter-spacing:0.05px">undefined</div>
<div class="t s " style="left:917.44px;top:525px;font-size:27.29px;color:#cbd5e1;-webkit-text-stroke:0.6px #cbd5e1;letter-spacing:0.39px">Status Message</div>
<svg class="i" style="left:1613.8px;top:526.8px" width="24.11" height="24.11" viewBox="0 0 24 24" stroke="#e2e8f0" stroke-width="1.8"><path d="M12 22v-6"/><path d="M12 8V2"/><path d="M4 12H2"/><path d="M10 12H8"/><path d="M16 12h-2"/><path d="M22 12h-2"/><path d="m15 19-3-3-3 3"/><path d="m15 5-3 3-3-3"/></svg>
<svg class="i" style="left:1653.8px;top:527.2px" width="24.11" height="24.11" viewBox="0 0 24 24" stroke="#e2e8f0" stroke-width="1.8"><rect width="14" height="14" x="8" y="8" rx="2" ry="2"/><path d="M4 16c-1.1 0-2-.9-2-2V4c0-1.1.9-2 2-2h10c1.1 0 2 .9 2 2"/></svg>
<div class="b" style="left:910.4px;top:571px;width:789.6px;height:136px;border-radius:9px;border:2px solid #34445f;box-sizing:border-box"></div>
<div class="t m " style="left:925.52px;top:596px;font-size:22.55px;color:#93c5fd;-webkit-text-stroke:0.35px #93c5fd">"An error occurred (ThrottlingException) when calling</div>
<div class="t m " style="left:926.65px;top:630px;font-size:22.55px;color:#93c5fd;-webkit-text-stroke:0.35px #93c5fd">the Converse operation (reached max retries: 5): Too</div>
<div class="t m " style="left:927.55px;top:663px;font-size:22.55px;color:#93c5fd;-webkit-text-stroke:0.35px #93c5fd">many tokens, please wait before trying again."</div>
<div class="t s " style="left:933.36px;top:744px;font-size:25.48px;color:#cbd5e1;-webkit-text-stroke:0.6px #cbd5e1;letter-spacing:1.6px">Metadata</div>
<svg class="i" style="left:1597.89px;top:743.99px" width="24.33" height="24.33" viewBox="0 0 24 24" stroke="#e2e8f0" stroke-width="1.8"><path d="M12 22v-6"/><path d="M12 8V2"/><path d="M4 12H2"/><path d="M10 12H8"/><path d="M16 12h-2"/><path d="M22 12h-2"/><path d="m15 19-3-3-3 3"/><path d="m15 5-3 3-3-3"/></svg>
<svg class="i" style="left:1637.9px;top:744px" width="24.11" height="24.11" viewBox="0 0 24 24" stroke="#e2e8f0" stroke-width="1.8"><rect width="14" height="14" x="8" y="8" rx="2" ry="2"/><path d="M4 16c-1.1 0-2-.9-2-2V4c0-1.1.9-2 2-2h10c1.1 0 2 .9 2 2"/></svg>
<div class="b" style="left:926.3px;top:788.2px;width:747.7px;height:841.5px;border-radius:10px;border:2px solid #34445f;box-sizing:border-box"></div>
<div class="t m " style="left:942.89px;top:814px;font-size:22.55px;color:#93c5fd;-webkit-text-stroke:0.35px #93c5fd">{</div>
<div class="t m " style="left:967.67px;top:815px;font-size:21.79px;color:#44608a;font-style:italic;letter-spacing:-1.23px">3 Items</div>
<svg class="i" style="left:1051.84px;top:813.99px" width="23.14" height="23.14" viewBox="0 0 24 24" stroke="#44608a" stroke-width="1.6"><path d="m6 9 6 6 6-6"/></svg>
<div class="t m " style="left:966.62px;top:847px;font-size:22.55px;color:#93c5fd;-webkit-text-stroke:0.35px #93c5fd">attributes: {</div>
<div class="t m " style="left:1153.2px;top:848px;font-size:22.12px;color:#44608a;font-style:italic;letter-spacing:-1.5px">5 Items</div>
<svg class="i" style="left:1237.16px;top:847.47px" width="23.14" height="23.14" viewBox="0 0 24 24" stroke="#44608a" stroke-width="1.6"><path d="m6 9 6 6 6-6"/></svg>
<div class="t m " style="left:989px;top:881px;font-size:22.55px;color:#93c5fd;-webkit-text-stroke:0.35px #93c5fd">gen_ai.event.start_time: </div>
<div class="t m " style="left:1326.42px;top:881px;font-size:22.55px;color:#dbe3ef;-webkit-text-stroke:0.35px #dbe3ef">"2025-11-</div>
<div class="t m " style="left:989px;top:914px;font-size:22.55px;color:#dbe3ef;-webkit-text-stroke:0.35px #dbe3ef">26T13:37:14.865817+00:00"</div>
<div class="t m " style="left:989px;top:948px;font-size:22.55px;color:#93c5fd;-webkit-text-stroke:0.35px #93c5fd">gen_ai.operation.name: </div>
<div class="t m " style="left:1299.3px;top:948px;font-size:22.55px;color:#dbe3ef;-webkit-text-stroke:0.35px #dbe3ef">"chat"</div>
<div class="t m " style="left:989px;top:981px;font-size:22.55px;color:#93c5fd;-webkit-text-stroke:0.35px #93c5fd">gen_ai.system: </div>
<div class="t m " style="left:1190.82px;top:981px;font-size:22.55px;color:#dbe3ef;-webkit-text-stroke:0.35px #dbe3ef">"strands-agents"</div>
<div class="t m " style="left:989px;top:1015px;font-size:22.55px;color:#93c5fd;-webkit-text-stroke:0.35px #93c5fd">gen_ai.request.model: </div>
<div class="t m " style="left:1285.74px;top:1015px;font-size:22.55px;color:#dbe3ef;-webkit-text-stroke:0.35px #dbe3ef">"global.anthropic.claude-</div>
<div class="t m " style="left:988.77px;top:1048px;font-size:22.55px;color:#dbe3ef;-webkit-text-stroke:0.35px #dbe3ef">sonnet-4-5-20250929-v1:0"</div>
<div class="t m " style="left:989px;top:1082px;font-size:22.55px;color:#93c5fd;-webkit-text-stroke:0.35px #93c5fd">gen_ai.event.end_time: </div>
<div class="t m " style="left:1299.3px;top:1082px;font-size:22.55px;color:#dbe3ef;-webkit-text-stroke:0.35px #dbe3ef">"2025-11-</div>
<div class="t m " style="left:989px;top:1115px;font-size:22.55px;color:#dbe3ef;-webkit-text-stroke:0.35px #dbe3ef">26T13:37:26.229432+00:00"</div>
<div class="t m " style="left:966.17px;top:1149px;font-size:22.55px;color:#93c5fd;-webkit-text-stroke:0.35px #93c5fd">}</div>
<div class="t m " style="left:965.27px;top:1182px;font-size:22.55px;color:#93c5fd;-webkit-text-stroke:0.35px #93c5fd">resourceAttributes: {</div>
<div class="t m " style="left:1261.68px;top:1183px;font-size:22.12px;color:#44608a;font-style:italic;letter-spacing:-1.5px">5 Items</div>
<svg class="i" style="left:1345.64px;top:1182.27px" width="23.14" height="23.14" viewBox="0 0 24 24" stroke="#44608a" stroke-width="1.6"><path d="m6 9 6 6 6-6"/></svg>
<div class="t m " style="left:988.55px;top:1216px;font-size:22.55px;color:#93c5fd;-webkit-text-stroke:0.35px #93c5fd">telemetry.sdk.language: </div>
<div class="t m " style="left:1312.86px;top:1216px;font-size:22.55px;color:#dbe3ef;-webkit-text-stroke:0.35px #dbe3ef">"python"</div>
<div class="t m " style="left:988.55px;top:1249px;font-size:22.55px;color:#93c5fd;-webkit-text-stroke:0.35px #93c5fd">telemetry.sdk.name: </div>
<div class="t m " style="left:1258.62px;top:1249px;font-size:22.55px;color:#dbe3ef;-webkit-text-stroke:0.35px #dbe3ef">"opentelemetry"</div>
<div class="t m " style="left:988.55px;top:1283px;font-size:22.55px;color:#93c5fd;-webkit-text-stroke:0.35px #93c5fd">telemetry.sdk.version: </div>
<div class="t m " style="left:1299.3px;top:1283px;font-size:22.55px;color:#dbe3ef;-webkit-text-stroke:0.35px #dbe3ef">"1.38.0"</div>
<div class="t m " style="left:988.77px;top:1316px;font-size:22.55px;color:#93c5fd;-webkit-text-stroke:0.35px #93c5fd">service.name: </div>
<div class="t m " style="left:1177.26px;top:1316px;font-size:22.55px;color:#dbe3ef;-webkit-text-stroke:0.35px #dbe3ef">"strands-agents"</div>
<div class="t m " style="left:988.77px;top:1350px;font-size:22.55px;color:#93c5fd;-webkit-text-stroke:0.35px #93c5fd">service.version: </div>
<div class="t m " style="left:1217.94px;top:1350px;font-size:22.55px;color:#dbe3ef;-webkit-text-stroke:0.35px #dbe3ef">"1.18.0"</div>
<div class="t m " style="left:966.17px;top:1383px;font-size:22.55px;color:#93c5fd;-webkit-text-stroke:0.35px #93c5fd">}</div>
<div class="t m " style="left:966.17px;top:1417px;font-size:22.55px;color:#93c5fd;-webkit-text-stroke:0.35px #93c5fd">scope: {</div>
<div class="t m " style="left:1085.84px;top:1418px;font-size:21.79px;color:#44608a;font-style:italic;letter-spacing:-1.34px">2 Items</div>
<svg class="i" style="left:1169.36px;top:1416.63px" width="23.14" height="23.14" viewBox="0 0 24 24" stroke="#44608a" stroke-width="1.6"><path d="m6 9 6 6 6-6"/></svg>
<div class="t m " style="left:988.55px;top:1450px;font-size:22.55px;color:#93c5fd;-webkit-text-stroke:0.35px #93c5fd">name: </div>
<div class="t m " style="left:1068.78px;top:1450px;font-size:22.55px;color:#dbe3ef;-webkit-text-stroke:0.35px #dbe3ef">"strands.telemetry.tracer"</div>
<div class="t m " style="left:989.22px;top:1484px;font-size:22.55px;color:#93c5fd;-webkit-text-stroke:0.35px #93c5fd">attributes: {</div>
<div class="t m " style="left:1175.37px;top:1485px;font-size:21.79px;color:#44608a;font-style:italic;letter-spacing:-1.2px">0 Items</div>
<svg class="i" style="left:1259.76px;top:1483.59px" width="23.14" height="23.14" viewBox="0 0 24 24" stroke="#44608a" stroke-width="1.6"><path d="m6 9 6 6 6-6"/></svg>
<div class="t m " style="left:988.77px;top:1517px;font-size:22.55px;color:#93c5fd;-webkit-text-stroke:0.35px #93c5fd">}</div>
<div class="t m " style="left:966.17px;top:1551px;font-size:22.55px;color:#93c5fd;-webkit-text-stroke:0.35px #93c5fd">}</div>
<div class="t m " style="left:943.57px;top:1584px;font-size:22.55px;color:#93c5fd;-webkit-text-stroke:0.35px #93c5fd">}</div>
</body></html>
